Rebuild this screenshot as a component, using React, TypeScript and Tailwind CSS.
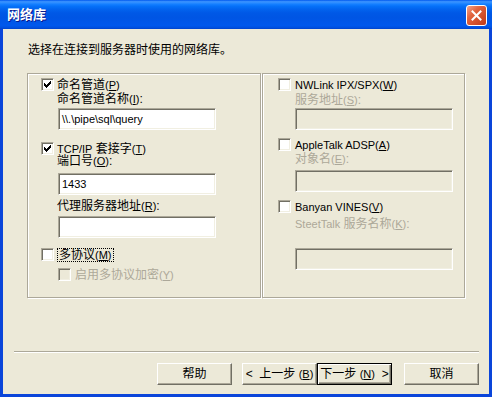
const FONT = "font-['Liberation_Sans','Noto_Sans_CJK_SC',sans-serif]"

// classic sunken 3D edge used by text boxes and checkboxes
const SUNKEN =
  'border border-t-[#ACA899] border-l-[#ACA899] border-b-white border-r-white shadow-[inset_1px_1px_0_#716F64,inset_-1px_-1px_0_#F1EFE2]'

// 7x7 classic tick, drawn as 3px-tall columns
const TICK = [
  [3, 5],
  [4, 6],
  [5, 7],
  [6, 6],
  [7, 5],
  [8, 4],
  [9, 3],
]

function CheckBox({ checked = false, disabled = false }: { checked?: boolean; disabled?: boolean }) {
  return (
    <div className={`w-[13px] h-[13px] flex-shrink-0 ${SUNKEN} ${disabled ? 'bg-[#ECE9D8]' : 'bg-white'}`}>
      {checked && (
        <svg width="11" height="11" viewBox="1 1 11 11" shapeRendering="crispEdges">
          <path d={TICK.map(([x, y]) => `M${x} ${y}h1v3h-1z`).join('')} fill={disabled ? '#ACA899' : '#000'} />
        </svg>
      )}
    </div>
  )
}

function Latin({ children }: { children: React.ReactNode }) {
  return <span className="text-[11px]">{children}</span>
}

function Key({ k }: { k: string }) {
  return (
    <span className="text-[11px]">
      (<span className="underline underline-offset-1">{k}</span>)
    </span>
  )
}

function TextBox({ value = '', disabled = false, className = '' }: { value?: string; disabled?: boolean; className?: string }) {
  return (
    <div
      className={`w-[158px] h-[22px] flex items-center pl-[3px] text-[11px] text-black ${SUNKEN} ${
        disabled ? 'bg-[#ECE9D8]' : 'bg-white'
      } ${className}`}
    >
      {value}
    </div>
  )
}

function Button({ children, isDefault = false, className = '' }: { children: React.ReactNode; isDefault?: boolean; className?: string }) {
  const edge = isDefault
    ? 'border border-black shadow-[inset_1px_1px_0_#fff,inset_-1px_-1px_0_#716F64,inset_-2px_-2px_0_#ACA899]'
    : 'border border-t-white border-l-white border-b-[#716F64] border-r-[#716F64] shadow-[inset_-1px_-1px_0_#ACA899]'
  return (
    <div className={`w-[75px] h-[22px] flex items-center justify-center whitespace-pre bg-[#ECE9D8] text-[12px] leading-[12px] ${edge} ${className}`}>
      {children}
    </div>
  )
}

const GROUP = 'h-[225px] border border-[#ACA899] shadow-[1px_1px_0_#fff,inset_1px_1px_0_#fff] flex flex-col'

export default function App() {
  return (
    <div className={`w-[492px] h-[397px] flex flex-col bg-[#0A45DA] text-black ${FONT}`}>
      {/* Title bar */}
      <div className="h-[29px] flex-shrink-0 flex items-start justify-between bg-[linear-gradient(to_bottom,#0058EE_0%,#3D95FF_6%,#2A8BFF_10%,#137EFF_15%,#0570F8_22%,#0263EE_32%,#0058E6_45%,#0055E4_62%,#0057EA_80%,#0058EC_88%,#0050E0_95%,#0043CC_100%)]">
        <div className="mt-[7px] ml-[7px] text-[13px] leading-[15px] font-bold text-white [text-shadow:1px_1px_0_#0A1A8C]">
          网络库
        </div>
        <div className="mt-[5px] mr-[5px] w-[21px] h-[21px] rounded-[3px] border border-white bg-[linear-gradient(135deg,#F2A48C_0%,#E2643F_35%,#D2502C_65%,#C03A1A_100%)] flex items-center justify-center">
          <svg width="11" height="11" viewBox="0 0 11 11">
            <path d="M1.5 1.5L9.5 9.5M9.5 1.5L1.5 9.5" stroke="#fff" strokeWidth="2" strokeLinecap="square" />
          </svg>
        </div>
      </div>

      {/* Dialog body */}
      <div className="flex-1 mx-[3px] mb-[3px] bg-[#ECE9D8] flex flex-col">
        <div className="mt-[15px] pl-[25px] h-[12px] text-[12px] leading-[12px]">选择在连接到服务器时使用的网络库。</div>

        <div className="mt-[17px] ml-[24px] flex gap-[1px] text-[12px] leading-[12px]">
          {/* Left group */}
          <div className={`w-[234px] pl-[13px] ${GROUP}`}>
            <div className="mt-[4px] h-[13px] flex items-center gap-[3px]">
              <CheckBox checked />
              <span>
                命名管道<Key k="P" />
              </span>
            </div>
            <div className="mt-[2px] h-[12px] pl-[16px]">
              命名管道名称<Key k="I" />:
            </div>
            <TextBox className="mt-[3px] ml-[17px]" value={'\\\\.\\pipe\\sql\\query'} />

            <div className="mt-[12px] h-[13px] flex items-center gap-[3px]">
              <CheckBox checked />
              <span>
                <Latin>TCP/IP</Latin> 套接字<Key k="T" />
              </span>
            </div>
            <div className="h-[12px] pl-[16px]">
              端口号<Key k="O" />:
            </div>
            <TextBox className="mt-[6px] ml-[17px]" value="1433" />
            <div className="mt-[5px] h-[12px] pl-[16px]">
              代理服务器地址<Key k="R" />:
            </div>
            <TextBox className="mt-[4px] ml-[17px]" />

            <div className="mt-[10px] h-[13px] flex items-center gap-[3px]">
              <CheckBox />
              <span className="border border-dotted border-black px-[1px] leading-[12px]">
                多协议<Key k="M" />
              </span>
            </div>
            <div className="mt-[7px] ml-[17px] h-[13px] flex items-center gap-[4px] text-[#ACA899]">
              <CheckBox disabled />
              <span>
                启用多协议加密<Key k="Y" />
              </span>
            </div>
          </div>

          {/* Right group */}
          <div className={`w-[203px] pl-[15px] ${GROUP}`}>
            <div className="mt-[4px] h-[13px] flex items-center gap-[4px]">
              <CheckBox />
              <span>
                <Latin>NWLink IPX/SPX</Latin>
                <Key k="W" />
              </span>
            </div>
            <div className="mt-[3px] h-[12px] pl-[17px] text-[#ACA899]">
              服务地址<Key k="S" />:
            </div>
            <TextBox disabled className="mt-[2px] ml-[17px]" />

            <div className="mt-[8px] h-[13px] flex items-center gap-[4px]">
              <CheckBox />
              <span>
                <Latin>AppleTalk ADSP</Latin>
                <Key k="A" />
              </span>
            </div>
            <div className="mt-[2px] h-[12px] pl-[17px] text-[#ACA899]">
              对象名<Key k="E" />:
            </div>
            <TextBox disabled className="mt-[5px] ml-[17px]" />

            <div className="mt-[8px] h-[13px] flex items-center gap-[4px]">
              <CheckBox />
              <span>
                <Latin>Banyan VINES</Latin>
                <Key k="V" />
              </span>
            </div>
            <div className="mt-[5px] h-[12px] pl-[17px] text-[#ACA899]">
              <Latin>SteetTalk</Latin> 服务名称<Key k="K" />:
            </div>
            <TextBox disabled className="mt-[18px] ml-[17px]" />
          </div>
        </div>

        {/* Etched separator */}
        <div className="mt-[53px] ml-[11px] mr-[10px] h-[2px] border-t border-t-[#ACA899] border-b border-b-white" />

        {/* Buttons */}
        <div className="mt-[10px] pr-[10px] flex justify-end">
          <Button>帮助</Button>
          <Button className="ml-[10px]">
            {'<  上一步 '}
            <Key k="B" />
          </Button>
          <Button isDefault>
            {'下一步 '}
            <Key k="N" />
            {'  >'}
          </Button>
          <Button className="ml-[12px]">取消</Button>
        </div>
      </div>
    </div>
  )
}
